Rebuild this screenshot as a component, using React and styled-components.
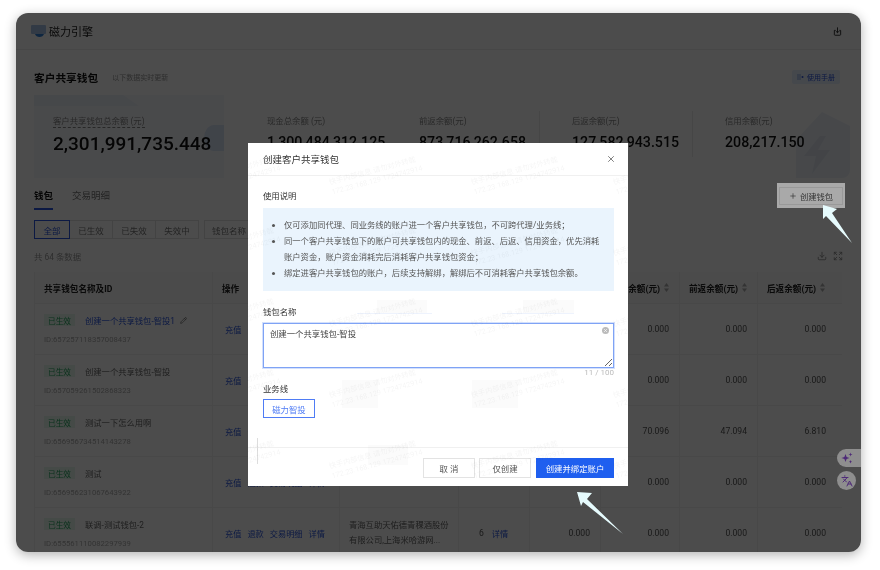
import styled, { createGlobalStyle } from 'styled-components';
import { Download, Expand, Languages, Pencil, X, Plus } from 'lucide-react';

const GlobalStyle = createGlobalStyle`
  html, body {
    margin: 0;
    background: #fff;
    font-family: Roboto, "Noto Sans CJK SC", sans-serif;
  }
  * {
    box-sizing: border-box;
  }
`;

const Stage = styled.div`
  width: 880px;
  height: 570px;
  padding: 13px 19px 18px 16px;
  overflow: hidden;
`;

const Frame = styled.div`
  position: relative;
  width: 845px;
  height: 539px;
  border-radius: 12px;
  overflow: hidden;
  background: #fff;
  box-shadow: 0 3px 12px rgba(0, 0, 0, 0.3);
  filter: blur(0.45px);
`;

const TopBar = styled.header`
  height: 37px;
  display: flex;
  align-items: center;
  justify-content: space-between;
  padding: 0 19px 0 15px;
  border-bottom: 1px solid #eee;
`;

const Brand = styled.div`
  display: flex;
  align-items: center;
  gap: 3px;
  font-size: 11px;
  color: #222;
`;

const Main = styled.main`
  position: relative;
  isolation: isolate;
  padding: 18px 11px 0 18px;
`;

const TitleRow = styled.div`
  height: 18px;
  display: flex;
  align-items: center;
  padding-right: 10px;
`;

const PageTitle = styled.h1`
  margin: 0;
  font-size: 10.7px;
  font-weight: 700;
  color: #111;
`;

const Sub = styled.span`
  margin-left: 14px;
  font-size: 7px;
  color: #999;
`;

const ManualBadge = styled.span`
  margin-left: auto;
  display: flex;
  align-items: center;
  gap: 3px;
  height: 14px;
  padding: 0 5px;
  font-size: 7px;
  color: #2a55e0;
  background: #e8f0fd;
  border-radius: 2px;
`;

const StatsRow = styled.section`
  position: relative;
  margin-top: 9px;
  height: 83px;
  display: grid;
  grid-template-columns: 190px 162px 153px 153px 158px;
  overflow: hidden;
`;

const StatCard = styled.div`
  position: relative;
  padding: 14px 0 0 ${p => p.$pad}px;
  background: ${p => (p.$hero ? '#f6f8fc' : 'transparent')};
  height: 83px;
  &::before {
    content: '';
    display: ${p => (p.$line ? 'block' : 'none')};
    position: absolute;
    left: 0;
    top: 16px;
    width: 1px;
    height: 46px;
    background: #ececec;
  }
`;

const HeroBand = styled.i`
  position: absolute;
  left: 0;
  top: 0;
  width: 105px;
  height: 11px;
  background: #ecf1f9;
  clip-path: polygon(0 0, 85% 0, 100% 100%, 0 100%);
`;

const HeroRound = styled.i`
  position: absolute;
  right: 0;
  top: 30px;
  width: 20px;
  height: 26px;
  background: #d6e3f5;
  border-radius: 60% 0 0 60%;
`;

const CornerBolt = styled.svg`
  position: absolute;
  z-index: 0;
  right: 0;
  top: 17px;
`;

const StatLabel = styled.span`
  position: relative;
  z-index: 1;
  display: inline-block;
  font-size: 8.4px;
  line-height: 12px;
  color: #888;
  border-bottom: ${p => (p.$dash ? '1px dashed #888' : '0')};
`;

const StatValue = styled.div`
  position: relative;
  z-index: 1;
  margin-top: ${p => (p.$big ? 4 : 2)}px;
  font-size: ${p => (p.$big ? 19 : 14.2)}px;
  line-height: 24px;
  font-weight: 500;
  color: #111;
  white-space: nowrap;
`;

const TabBar = styled.nav`
  margin-top: 9px;
  height: 23px;
  display: flex;
  gap: 19px;
  font-size: 9.5px;
  line-height: 18px;
  color: #777;
`;

const Tab = styled.span`
  height: 23px;
  color: ${p => (p.$on ? '#111' : '#777')};
  font-weight: ${p => (p.$on ? 700 : 400)};
  border-bottom: ${p => (p.$on ? '2px solid #2a55e0' : '0')};
`;

const FilterRow = styled.div`
  margin-top: 10px;
  display: flex;
  gap: 5px;
  height: 19px;
`;

const Segments = styled.div`
  display: flex;
`;

const Segment = styled.span`
  width: ${p => p.$w}px;
  height: 19px;
  margin-left: -1px;
  display: flex;
  align-items: center;
  justify-content: center;
  font-size: 8.5px;
  color: ${p => (p.$on ? '#2a55e0' : '#777')};
  border: 1px solid ${p => (p.$on ? '#2a55e0' : '#e2e2e2')};
  position: relative;
  z-index: ${p => (p.$on ? 1 : 0)};
  &:first-child {
    margin-left: 0;
  }
`;

const NameFilter = styled.span`
  width: 120px;
  height: 19px;
  padding-left: 7px;
  display: flex;
  align-items: center;
  font-size: 8.5px;
  color: #777;
  border: 1px solid #e2e2e2;
`;

const CountRow = styled.div`
  margin-top: 8px;
  height: 18px;
  display: flex;
  align-items: center;
  justify-content: space-between;
  padding-right: 7px;
  width: 816px;
  font-size: 8.4px;
  color: #999;
`;

const ToolIcons = styled.div`
  display: flex;
  gap: 6px;
  color: #888;
`;

const Table = styled.div`
  margin-top: 7px;
  width: 808px;
`;

const TRow = styled.div`
  display: grid;
  grid-template-columns: 178px 127px 119px 71px 71px 79px 78px 85px;
  height: ${p => (p.$head ? 32 : 51)}px;
  background: ${p => (p.$head ? '#fafafa' : '#fff')};
  border-bottom: 1px solid #f0f0f0;
`;

const Cell = styled.div`
  display: flex;
  align-items: center;
  justify-content: ${p => (p.$right ? 'flex-end' : 'flex-start')};
  gap: ${p => p.$gap || 6}px;
  padding: ${p => (p.$right ? `0 ${p.$pr || 10}px 0 0` : `0 0 0 ${p.$pl || 9}px`)};
  font-size: 8.6px;
  color: #555;
  border-left: 1px solid #f2f2f2;
  white-space: nowrap;
`;

const NameCell = styled(Cell)`
  flex-direction: column;
  align-items: flex-start;
  gap: 9px;
  padding: 10px 0 0 9px;
`;

const HeadCell = styled(Cell)`
  font-weight: 700;
  color: #222;
  gap: 4px;
`;

const NameLine = styled.div`
  display: flex;
  align-items: center;
  gap: 10px;
  height: 12px;
`;

const StatusTag = styled.span`
  width: 31px;
  height: 12px;
  display: flex;
  align-items: center;
  justify-content: center;
  font-size: 7.7px;
  color: #28a75f;
  background: #e6f7ee;
`;

const WalletName = styled.span`
  font-size: 8.3px;
  color: ${p => (p.$link ? '#2a55e0' : '#666')};
  display: flex;
  align-items: center;
  gap: 5px;
`;

const WalletId = styled.span`
  font-size: 7.7px;
  color: #aaa;
`;

const Link = styled.span`
  color: #2a55e0;
  font-size: 8.2px;
`;

const Company = styled.div`
  line-height: 15px;
  font-size: 8.3px;
  color: #666;
`;

const Mask = styled.div`
  position: absolute;
  inset: 0;
  background: rgba(0, 0, 0, 0.7);
`;

const Dialog = styled.div`
  position: absolute;
  left: 232px;
  top: 130px;
  width: 380px;
  height: 343px;
  background: #fff;
  overflow: hidden;
  display: flex;
  flex-direction: column;
`;

const DialogHead = styled.div`
  height: 33px;
  flex: none;
  display: flex;
  align-items: center;
  justify-content: space-between;
  padding: 0 12px 0 15px;
  border-bottom: 1px solid #f0f0f0;
  font-size: 9.5px;
  color: #333;
`;

const DialogBody = styled.div`
  flex: 1;
  padding: 14px 14px 0 15px;
`;

const FieldLabel = styled.div`
  margin-top: ${p => p.$top || 0}px;
  font-size: 8.4px;
  line-height: 12px;
  color: #333;
`;

const Notes = styled.ul`
  margin: 6px 0 0;
  padding: 9px 12px 0 21px;
  height: 83px;
  background: #eaf4fd;
  font-size: 8.3px;
  line-height: 16px;
  color: #555;
`;

const NameInput = styled.textarea`
  display: block;
  margin-top: 5px;
  width: 100%;
  height: 45px;
  padding: 4px 6px;
  border: 1px solid #7fa3f5;
  outline: 0;
  box-shadow: 0 0 0 1px #d3e0fc;
  font-family: inherit;
  font-size: 8.4px;
  line-height: 12px;
  color: #444;
  resize: vertical;
`;

const InputWrap = styled.div`
  position: relative;
`;

const ClearDot = styled.span`
  position: absolute;
  right: 5px;
  top: 4px;
  width: 7px;
  height: 7px;
  border-radius: 50%;
  background: #bbb;
  color: #fff;
  display: flex;
  align-items: center;
  justify-content: center;
`;

const Counter = styled.div`
  text-align: right;
  font-size: 8px;
  line-height: 10px;
  color: #bbb;
`;

const LineTag = styled.span`
  display: flex;
  align-items: center;
  justify-content: center;
  margin-top: 4px;
  width: 52px;
  height: 19px;
  border: 1px solid #4f7cf5;
  font-size: 8.4px;
  color: #4f7cf5;
`;

const DialogFoot = styled.div`
  height: 39px;
  flex: none;
  display: flex;
  justify-content: flex-end;
  align-items: flex-start;
  gap: 4px;
  padding: 10px 14px 0 0;
  border-top: 1px solid #f0f0f0;
`;

const Btn = styled.span`
  width: ${p => p.$w}px;
  height: 20px;
  margin-left: ${p => (p.$primary ? 1 : 0)}px;
  display: flex;
  align-items: center;
  justify-content: center;
  font-size: 8.4px;
  color: ${p => (p.$primary ? '#fff' : '#555')};
  background: ${p => (p.$primary ? '#1f5fef' : '#fff')};
  border: 1px solid ${p => (p.$primary ? '#1f5fef' : '#e3e3e3')};
`;

const FootTick = styled.i`
  position: absolute;
  left: 9px;
  top: 295px;
  width: 1px;
  height: 26px;
  background: #ddd;
`;

const Ghost = styled.i`
  position: absolute;
  left: ${p => p.$x}px;
  top: ${p => p.$y}px;
  width: ${p => p.$w}px;
  height: ${p => p.$h}px;
  background: rgba(0, 0, 0, 0.014);
`;

const GhostLine = styled(Ghost)`
  background: #eef3fd;
`;

const Watermarks = styled.div`
  position: absolute;
  left: -62px;
  top: 35px;
  width: 568px;
  height: 355px;
  display: grid;
  grid-template-columns: repeat(4, 142px);
  grid-auto-rows: 71px;
  pointer-events: none;
`;

const Stamp = styled.div`
  transform: rotate(-15deg);
  transform-origin: left top;
  font-size: 7.3px;
  line-height: 10px;
  color: rgba(0, 0, 0, 0.045);
  white-space: nowrap;
`;

const Highlight = styled.div`
  position: absolute;
  left: 761px;
  top: 170px;
  width: 68px;
  height: 25px;
  padding: 4px 2px;
  background: #a9a9a9;
`;

const CreateBtn = styled.div`
  height: 18px;
  display: flex;
  align-items: center;
  justify-content: center;
  gap: 3px;
  font-size: 8.3px;
  color: #333;
  border: 1px solid #999;
`;

const Arrow = styled.svg`
  position: absolute;
  left: 0;
  top: 0;
  pointer-events: none;
`;

const Floater = styled.div`
  position: absolute;
  left: ${p => p.$x}px;
  top: ${p => p.$y}px;
  width: ${p => p.$w}px;
  height: ${p => p.$h}px;
  display: flex;
  align-items: center;
  justify-content: ${p => (p.$pill ? 'flex-start' : 'center')};
  padding-left: ${p => (p.$pill ? 4 : 0)}px;
  border-radius: ${p => (p.$pill ? '9px 0 0 9px' : '50%')};
  background: #8e8e8e;
  color: #4e2a78;
`;

const rows = [
  { name: '创建一个共享钱包-智投1', id: '657257118357008437', link: true },
  { name: '创建一个共享钱包-智投', id: '657059261502868323' },
  { name: '测试一下怎么用啊', id: '656956734514143278', a: '70.096', b: '47.094', c: '6.810' },
  { name: '测试', id: '656956231067643922' },
  { name: '联调-测试钱包-2', id: '655561110082297939', full: true },
];

const stats = [
  { label: '现金总余额 (元)', value: '1,300,484,312.125', pad: 43 },
  { label: '前返余额(元)', value: '873,716,262.658', pad: 33 },
  { label: '后返余额(元)', value: '127,582,943.515', pad: 33, line: true },
  { label: '信用余额(元)', value: '208,217.150', pad: 33, line: true },
];

const ghosts = [
  { x: 129, y: 157, w: 50, h: 13 },
  { x: 275, y: 157, w: 51, h: 13 },
  { x: 94, y: 237, w: 36, h: 28 },
  { x: 224, y: 237, w: 46, h: 28 },
  { x: 120, y: 302, w: 40, h: 20 },
];

const Sort = () => (
  <svg width="5" height="9" viewBox="0 0 5 9" fill="#aaa">
    <path d="M2.500 0 5 3.500H0z" />
    <path d="M2.500 9 0 5.500h5z" />
  </svg>
);

const stampList = Array.from({ length: 20 }, (_, i) => i);

function App() {
  return (
    <>
      <GlobalStyle />
      <Stage>
        <Frame>
          <TopBar>
            <Brand>
              <svg width="15" height="12" viewBox="0 0 15 12">
                <rect x="0" y="0" width="15" height="9" rx="1" fill="#a9c3e6" />
                <path d="M4 9h9c-.6 1.800-2.400 3-4.500 3S4.600 10.800 4 9z" fill="#2f7fd8" />
              </svg>
              磁力引擎
            </Brand>
            <svg width="9" height="9" viewBox="0 0 12 12" fill="none" stroke="#222" strokeWidth="1.2">
              <path d="M6 .5v7M3.800 5.500 6 7.700l2.200-2.200" />
              <path d="M3.500 4.500H1.800V10a1 1 0 0 0 1 1h6.400a1 1 0 0 0 1-1V4.500H8.500" />
            </svg>
          </TopBar>
          <Main>
            <TitleRow>
              <PageTitle>客户共享钱包</PageTitle>
              <Sub>以下数据实时更新</Sub>
              <ManualBadge>
                <svg width="7" height="6" viewBox="0 0 7 6">
                  <rect width="4" height="6" fill="#b9ccf2" />
                  <circle cx="5.500" cy="3" r="1" fill="#2a55e0" />
                </svg>
                使用手册
              </ManualBadge>
            </TitleRow>
            <StatsRow>
              <StatCard $hero $pad={19}>
                <HeroBand />
                <HeroRound />
                <StatLabel $dash>客户共享钱包总余额 (元)</StatLabel>
                <StatValue $big>2,301,991,735.448</StatValue>
              </StatCard>
              {stats.map(s => (
                <StatCard key={s.label} $pad={s.pad} $line={s.line}>
                  <StatLabel>{s.label}</StatLabel>
                  <StatValue>{s.value}</StatValue>
                </StatCard>
              ))}
              <CornerBolt width="54" height="66" viewBox="0 0 54 66">
                <path d="M0 28 26 0 54 14V58a8 8 0 0 1-8 8H0z" fill="#eef2f8" />
                <path d="M24 24 8 44h12l-4 18 18-24H22l8-14z" fill="#dfe5ef" />
              </CornerBolt>
            </StatsRow>
            <TabBar>
              <Tab $on>钱包</Tab>
              <Tab>交易明细</Tab>
            </TabBar>
            <FilterRow>
              <Segments>
                <Segment $w={36} $on>全部</Segment>
                <Segment $w={44}>已生效</Segment>
                <Segment $w={44}>已失效</Segment>
                <Segment $w={44}>失效中</Segment>
              </Segments>
              <NameFilter>钱包名称</NameFilter>
            </FilterRow>
            <CountRow>
              共 64 条数据
              <ToolIcons>
                <Download size={10} />
                <Expand size={10} />
              </ToolIcons>
            </CountRow>
            <Table>
              <TRow $head>
                <HeadCell>共享钱包名称及ID</HeadCell>
                <HeadCell>操作</HeadCell>
                <HeadCell>绑定账户</HeadCell>
                <HeadCell>账户数</HeadCell>
                <HeadCell $right>余额</HeadCell>
                <HeadCell $right>现金余额(元) <Sort /></HeadCell>
                <HeadCell $right>前返余额(元) <Sort /></HeadCell>
                <HeadCell $right $pr={17}>后返余额(元) <Sort /></HeadCell>
              </TRow>
              {rows.map(r => (
                <TRow key={r.id}>
                  <NameCell>
                    <NameLine>
                      <StatusTag>已生效</StatusTag>
                      <WalletName $link={r.link}>
                        {r.name}
                        {r.link && <Pencil size={7} color="#555" />}
                      </WalletName>
                    </NameLine>
                    <WalletId>ID:{r.id}</WalletId>
                  </NameCell>
                  <Cell $pl={12}>
                    <Link>充值</Link>
                    <Link>退款</Link>
                    <Link>交易明细</Link>
                    <Link>详情</Link>
                  </Cell>
                  <Cell $pl={9}>
                    {r.full && (
                      <Company>
                        青海互助天佑德青稞酒股份
                        <br />
                        有限公司,上海米哈游网...
                      </Company>
                    )}
                  </Cell>
                  <Cell $pl={20} $gap={8}>
                    {r.full && '6'}
                    {r.full && <Link>详情</Link>}
                  </Cell>
                  <Cell $right>0.000</Cell>
                  <Cell $right>{r.a || '0.000'}</Cell>
                  <Cell $right>{r.b || '0.000'}</Cell>
                  <Cell $right $pr={16}>{r.c || '0.000'}</Cell>
                </TRow>
              ))}
            </Table>
          </Main>

          <Mask>
            <Dialog>
              <DialogHead>
                创建客户共享钱包
                <X size={10} color="#666" />
              </DialogHead>
              <DialogBody>
                <FieldLabel>使用说明</FieldLabel>
                <Notes>
                  <li>仅可添加同代理、同业务线的账户进一个客户共享钱包，不可跨代理/业务线；</li>
                  <li>同一个客户共享钱包下的账户可共享钱包内的现金、前返、后返、信用资金，优先消耗账户资金，账户资金消耗完后消耗客户共享钱包资金；</li>
                  <li>绑定进客户共享钱包的账户，后续支持解绑，解绑后不可消耗客户共享钱包余额。</li>
                </Notes>
                <FieldLabel $top={15}>钱包名称</FieldLabel>
                <InputWrap>
                  <NameInput defaultValue="创建一个共享钱包-智投" />
                  <ClearDot><X size={5} strokeWidth={3} /></ClearDot>
                </InputWrap>
                <Counter>11 / 100</Counter>
                <FieldLabel $top={5}>业务线</FieldLabel>
                <LineTag>磁力智投</LineTag>
              </DialogBody>
              <DialogFoot>
                <Btn $w={52}>取 消</Btn>
                <Btn $w={52}>仅创建</Btn>
                <Btn $w={78} $primary>创建并绑定账户</Btn>
              </DialogFoot>
              <FootTick />
              {ghosts.map(g => (
                <Ghost key={g.x} $x={g.x} $y={g.y} $w={g.w} $h={g.h} />
              ))}
              <GhostLine $x={109} $y={170} $w={75} $h={1} />
              <GhostLine $x={254} $y={170} $w={72} $h={1} />
              <Watermarks>
                {stampList.map(i => (
                  <Stamp key={i}>
                    快手内部信息 请勿对外转载
                    <br />
                    172.23.168.129 1724742914
                  </Stamp>
                ))}
              </Watermarks>
            </Dialog>
          </Mask>

          <Highlight>
            <CreateBtn>
              <Plus size={8} />
              创建钱包
            </CreateBtn>
          </Highlight>
          <Floater $x={821} $y={436} $w={24} $h={18} $pill>
            <svg width="12" height="12" viewBox="0 0 12 12" fill="currentColor">
              <path d="M4.500 2 5.600 5 8.500 6 5.600 7 4.500 10 3.400 7 .5 6 3.400 5z" />
              <path d="M9.500 .5 10 2 11.500 2.500 10 3 9.500 4.500 9 3 7.500 2.500 9 2z" />
              <path d="M9.500 8 10 9.200 11 9.700 10 10.200 9.500 11.500 9 10.200 8 9.700 9 9.200z" />
            </svg>
          </Floater>
          <Floater $x={821} $y={458} $w={19} $h={19}>
            <Languages size={12} />
          </Floater>
          <Arrow width="845" height="539" viewBox="0 0 845 539">
            <polygon points="807,192 821,196 816,200 836,230 810,203 807,206" fill="#e6fbfd" />
            <polygon points="561,479 576,480 571,486 607,521 567,489 565,493" fill="#e6fbfd" />
          </Arrow>
        </Frame>
      </Stage>
    </>
  );
}

export default App;
